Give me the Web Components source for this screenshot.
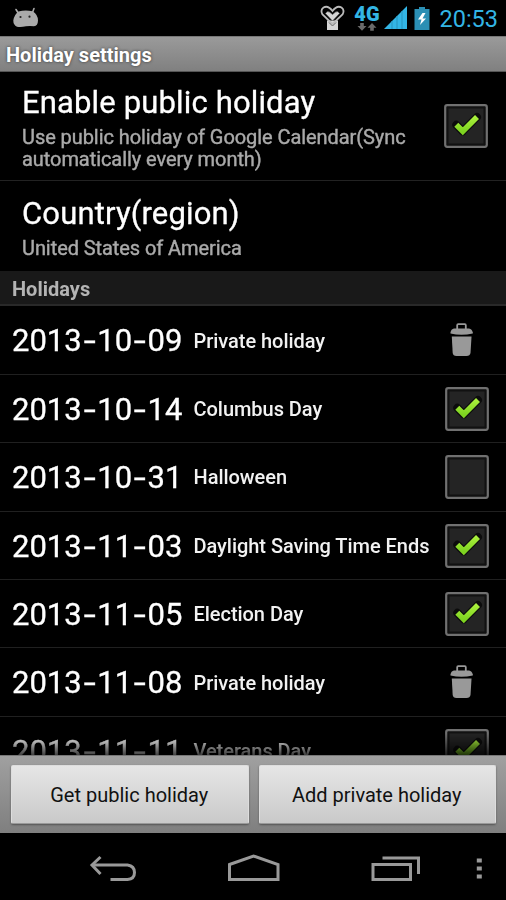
<!DOCTYPE html>
<html lang="en">
<head>
<meta charset="utf-8">
<title>Holiday settings</title>
<style>
    html, body {
        margin: 0;
        background: #000;
    }
    body {
        width: 506px;
        height: 900px;
        overflow: hidden;
        font-family: Roboto, "Liberation Sans", sans-serif;
    }
</style>
</head>
<body>
<holiday-app></holiday-app>

<script>
// Status Bar Component
class StatusBar extends HTMLElement {
    constructor() {
        super();
        this.attachShadow({ mode: 'open' });
    }

    connectedCallback() {
        this.shadowRoot.innerHTML = `
            <style>
                :host {
                    display: flex;
                    align-items: center;
                    height: 36px;
                    padding: 0 8px 0 12px;
                    box-sizing: border-box;
                    background: #000;
                    color: #33b5e5;
                }
                svg { display: block; flex: none; }
                .spacer { flex: 1; }
                .heart { margin-right: 8px; }
                .network {
                    display: flex;
                    flex-direction: column;
                    align-items: center;
                    width: 27px;
                    margin-right: 4px;
                    margin-top: 1px;
                }
                .network span {
                    font-size: 20px;
                    line-height: 16px;
                    font-weight: 900;
                    letter-spacing: 0.2px;
                    margin-bottom: 1px;
                }
                .signal { margin-right: 7px; margin-bottom: 1px; }
                .clock {
                    margin-left: 9px;
                    font-size: 23.5px;
                    line-height: 36px;
                    padding-top: 2px;
                }
            </style>
            <svg width="27" height="22" viewBox="0 0 27 22">
                <path d="M4 2.500l2.500 4M22 1.500l-1.500 4" stroke="#aaa" stroke-width="1.600" stroke-linecap="round"/>
                <path d="M6.500 4.500Q13 2.500 20.500 4.200Q26 7.500 26 13.500Q25.800 19 22 19.300Q18 18.500 14 19.300Q9 20.500 5 19.800Q1.300 18 1.300 13.500Q2.300 7.500 6.500 4.500z" fill="#aaa"/>
                <circle cx="8.500" cy="10" r="1.100" fill="#222"/>
                <circle cx="17.500" cy="9.700" r="1.100" fill="#222"/>
            </svg>
            <div class="spacer"></div>
            <svg class="heart" width="25" height="26" viewBox="0 0 25 26">
                <path d="M7 15.500h11v9.500h-11z" fill="#d5d5d5"/>
                <path d="M12.500 19L2.500 9.500Q0 5 3.500 2.500Q8 0 12.500 6Q17 0 21.500 2.500Q25 5 22.500 9.500z" fill="none" stroke="#bbb" stroke-width="1.800"/>
                <path d="M12.500 16L5.500 8.500Q7 5.500 9.500 7L12.500 9.500L15.500 7Q18 5.500 19.500 8.500z" fill="#d5d5d5" stroke="#555" stroke-width=".7"/>
                <path d="M9 17.500l3.500 3.500L16 17.500" fill="none" stroke="#666" stroke-width="1"/>
            </svg>
            <div class="network">
                <span>4G</span>
                <svg width="20" height="8" viewBox="0 0 20 8">
                    <path d="M3.200 0h3.600v3H9.500L5 7.800L.5 3h2.700zM13.200 7.800h3.600v-3h2.700L15 0l-4.500 4.800h2.700z" fill="#6a6a6a"/>
                </svg>
            </div>
            <svg class="signal" width="23" height="23" viewBox="0 0 23 23">
                <path d="M0 23L23 0v23z" fill="#33b5e5"/>
                <path d="M8 15v8M13 10v13M18 5v18" stroke="#2899c4" stroke-width="1.200"/>
            </svg>
            <svg width="16" height="23" viewBox="0 0 16 23">
                <path d="M5 0h6v2h4.500v21H.5V2H5z" fill="#2b8fb4"/>
                <path d="M8.500 6L4 12.500h3.500L6 18L12 11.500H8.500L11.500 6z" fill="#fff"/>
            </svg>
            <span class="clock">20:53</span>
        `;
    }
}

// Title Bar Component
class TitleBar extends HTMLElement {
    constructor() {
        super();
        this.attachShadow({ mode: 'open' });
    }

    connectedCallback() {
        this.shadowRoot.innerHTML = `
            <style>
                :host {
                    display: block;
                    height: 36px;
                    box-sizing: border-box;
                    padding-left: 6px;
                    border-top: 1px solid #777;
                    border-bottom: 1px solid #555;
                    background: linear-gradient(#9a9a9a, #808080);
                    color: #fff;
                    font-size: 20px;
                    line-height: 36px;
                    font-weight: 700;
                    text-shadow: 0 0 3px #333;
                }
            </style>
            <slot></slot>
        `;
    }
}

// Check Box Component
class CheckBox extends HTMLElement {
    constructor() {
        super();
        this.attachShadow({ mode: 'open' });
    }

    connectedCallback() {
        const mark = this.hasAttribute('checked')
            ? '<path d="M12.300 20.800L18.800 27.300L33 13" fill="none" stroke="#0c0c0c" stroke-width="8" stroke-linejoin="round" stroke-linecap="round"/><path d="M12.300 20.800L18.800 27.300L33 13" fill="none" stroke="url(#g)" stroke-width="5.600"/>'
            : '';
        this.shadowRoot.innerHTML = `
            <style>
                :host { display: block; width: 44px; height: 44px; }
                svg { display: block; }
            </style>
            <svg width="44" height="44" viewBox="0 0 44 44">
                <defs>
                    <linearGradient id="g" x1="0" y1="0" x2="0" y2="1">
                        <stop offset="0" stop-color="#aaf03c"/>
                        <stop offset="1" stop-color="#7ed321"/>
                    </linearGradient>
                </defs>
                <rect x="1.200" y="1.200" width="41.600" height="41.600" rx="2" fill="#111" stroke="#707070" stroke-width="2.200"/>
                <rect x="4.500" y="4.500" width="35" height="35" fill="#242424"/>
                ${mark}
            </svg>
        `;
    }
}

// Trash Icon Component
class TrashIcon extends HTMLElement {
    constructor() {
        super();
        this.attachShadow({ mode: 'open' });
    }

    connectedCallback() {
        this.shadowRoot.innerHTML = `
            <style>
                :host { display: block; width: 24px; height: 34px; }
                svg { display: block; }
            </style>
            <svg width="24" height="34" viewBox="0 0 24 34">
                <path d="M7.200 6V2.200Q7.200 1.200 8.200 1.200H14.800Q15.800 1.200 15.800 2.200V6" fill="none" stroke="#999" stroke-width="1.800"/>
                <path d="M4 5.500H19Q22 6 22.800 9.500V10.500Q17 11.800 11.500 11.800T.5 10.500V9.500Q1 6 4 5.500z" fill="#999"/>
                <path d="M1.800 13.500H21.500L20.500 30Q20 33 16.500 33H6.500Q3 33 2.700 30z" fill="#999"/>
            </svg>
        `;
    }
}

// Preference Item Component
class PreferenceItem extends HTMLElement {
    constructor() {
        super();
        this.attachShadow({ mode: 'open' });
    }

    connectedCallback() {
        this.shadowRoot.innerHTML = `
            <style>
                :host {
                    display: flex;
                    align-items: center;
                    justify-content: space-between;
                    box-sizing: border-box;
                    padding: 0 18px 0 22px;
                }
                .title {
                    color: #fff;
                    font-size: 31px;
                    line-height: 38px;
                    letter-spacing: 0.15px;
                    -webkit-text-stroke: 0.3px;
                    white-space: nowrap;
                }
                .summary {
                    color: #aaa;
                    font-size: 20px;
                    line-height: 22.500px;
                    letter-spacing: -0.07px;
                    -webkit-text-stroke: 0.4px;
                    padding-top: 4px;
                    margin-bottom: -2px;
                    white-space: nowrap;
                }
            </style>
            <div>
                <div class="title"><slot name="title"></slot></div>
                <div class="summary"><slot name="summary"></slot></div>
            </div>
            <slot name="widget"></slot>
        `;
    }
}

// Holiday Row Component
class HolidayRow extends HTMLElement {
    constructor() {
        super();
        this.attachShadow({ mode: 'open' });
    }

    connectedCallback() {
        const date = this.getAttribute('date').split('-').join('<i>-</i>');
        let widget = '<trash-icon></trash-icon>';
        if (this.getAttribute('kind') !== 'private') {
            widget = this.hasAttribute('checked') ? '<check-box checked></check-box>' : '<check-box></check-box>';
        }
        this.shadowRoot.innerHTML = `
            <style>
                :host {
                    display: flex;
                    align-items: center;
                    height: 68.400px;
                    box-sizing: border-box;
                    border-bottom: 1px solid #202020;
                    padding: 1px 17px 0 12px;
                    color: #fff;
                    white-space: nowrap;
                }
                .date {
                    width: 181.500px;
                    font-size: 31px;
                    line-height: 64px;
                    padding-top: 1.400px;
                    -webkit-text-stroke: 0.3px;
                }
                .date i {
                    display: inline-block;
                    width: 15.500px;
                    text-align: center;
                    font-style: normal;
                    transform: scaleX(1.4);
                }
                .name {
                    flex: 1;
                    color: #f2f2f2;
                    font-size: 20px;
                    font-weight: 500;
                    letter-spacing: -0.04px;
                }
                trash-icon { margin-right: 15px; margin-bottom: 2px; }
            </style>
            <div class="date">${date}</div>
            <div class="name"><slot></slot></div>
            ${widget}
        `;
    }
}

// Action Button Component
class ActionButton extends HTMLElement {
    constructor() {
        super();
        this.attachShadow({ mode: 'open' });
    }

    connectedCallback() {
        this.shadowRoot.innerHTML = `
            <style>
                :host { display: block; flex: 1; }
                button {
                    display: block;
                    width: 100%;
                    height: 59px;
                    padding: 2px 1px 0 0;
                    border: 1px solid #ddd;
                    border-bottom-color: #999;
                    border-radius: 2px;
                    background: linear-gradient(#e6e6e6, #c9c9c9);
                    box-shadow: 0 1px 2px #555;
                    color: #111;
                    font: 400 20px/55px Roboto, "Liberation Sans", sans-serif;
                    white-space: nowrap;
                }
            </style>
            <button><slot></slot></button>
        `;
    }
}

// Navigation Bar Component
class NavBar extends HTMLElement {
    constructor() {
        super();
        this.attachShadow({ mode: 'open' });
    }

    connectedCallback() {
        this.shadowRoot.innerHTML = `
            <style>
                :host {
                    display: grid;
                    grid-template-columns: 89px 138px 144px 105px 1fr;
                    height: 67px;
                    background: #000;
                    box-sizing: border-box;
                    padding-top: 19px;
                }
                svg {
                    display: block;
                    fill: none;
                    stroke: #999;
                    stroke-width: 3;
                    overflow: visible;
                }
            </style>
            <span></span>
            <svg width="48" height="32"><path d="M4 13H38.500Q45.500 14 45.500 20.500T38.500 27.500H21.500"/><path d="M11.500 5L3 13L11.500 22"/></svg>
            <svg width="54" height="32"><path d="M2.500 12.500L26.500 4L51 12.500V27.500H2.500z"/></svg>
            <svg width="52" height="32"><path d="M2 12.500H39.500V27.500H2zM11.500 6H47.500V22"/></svg>
            <svg width="6" height="32"><path d="M.8 8.500H5.800M.8 16.500H5.800M.8 24.500H5.800" stroke-width="4.200"/></svg>
        `;
    }
}

// Holiday App Component
class HolidayApp extends HTMLElement {
    constructor() {
        super();
        this.attachShadow({ mode: 'open' });
    }

    connectedCallback() {
        this.shadowRoot.innerHTML = `
            <style>
                :host {
                    display: flex;
                    flex-direction: column;
                    width: 506px;
                    height: 900px;
                    background: #000;
                }
                .list {
                    height: 683px;
                    overflow: hidden;
                    -webkit-mask-image: linear-gradient(#000 calc(100% - 22px), rgba(0, 0, 0, 0.25));
                    mask-image: linear-gradient(#000 calc(100% - 22px), rgba(0, 0, 0, 0.25));
                }
                .public {
                    height: 109px;
                    border-bottom: 1px solid #222;
                }
                .country { height: 90px; }
                .section {
                    height: 35px;
                    box-sizing: border-box;
                    margin-bottom: 0.5px;
                    padding-left: 12px;
                    border-bottom: 2px solid #292929;
                    background: #191919;
                    color: #b4b4b4;
                    font-size: 20px;
                    font-weight: 700;
                    line-height: 36px;
                }
                .actions {
                    display: flex;
                    gap: 10px;
                    height: 78px;
                    box-sizing: border-box;
                    padding: 9px 10px 0 11px;
                    background: linear-gradient(#a0a0a0, #7f7f7f);
                    border-top: 1px solid #777;
                }
            </style>
            <status-bar></status-bar>
            <title-bar>Holiday settings</title-bar>
            <div class="list">
                <preference-item class="public">
                    <span slot="title">Enable public holiday</span>
                    <span slot="summary">Use public holiday of Google Calendar(Sync<br>automatically every month)</span>
                    <check-box slot="widget" checked></check-box>
                </preference-item>
                <preference-item class="country">
                    <span slot="title">Country(region)</span>
                    <span slot="summary">United States of America</span>
                </preference-item>
                <div class="section">Holidays</div>
                <holiday-row date="2013-10-09" kind="private">Private holiday</holiday-row>
                <holiday-row date="2013-10-14" checked>Columbus Day</holiday-row>
                <holiday-row date="2013-10-31">Halloween</holiday-row>
                <holiday-row date="2013-11-03" checked>Daylight Saving Time Ends</holiday-row>
                <holiday-row date="2013-11-05" checked>Election Day</holiday-row>
                <holiday-row date="2013-11-08" kind="private">Private holiday</holiday-row>
                <holiday-row date="2013-11-11" checked>Veterans Day</holiday-row>
            </div>
            <div class="actions">
                <action-button>Get public holiday</action-button>
                <action-button>Add private holiday</action-button>
            </div>
            <nav-bar></nav-bar>
        `;
    }
}

customElements.define('status-bar', StatusBar);
customElements.define('title-bar', TitleBar);
customElements.define('check-box', CheckBox);
customElements.define('trash-icon', TrashIcon);
customElements.define('preference-item', PreferenceItem);
customElements.define('holiday-row', HolidayRow);
customElements.define('action-button', ActionButton);
customElements.define('nav-bar', NavBar);
customElements.define('holiday-app', HolidayApp);
</script>
</body>
</html>
